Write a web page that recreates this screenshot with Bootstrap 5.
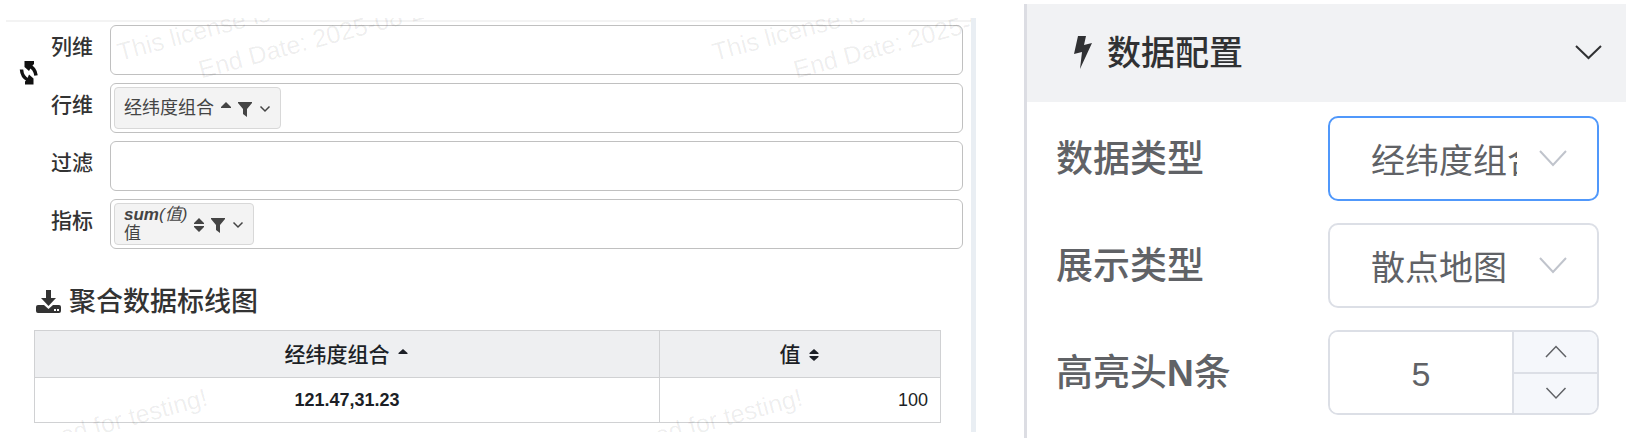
<!DOCTYPE html>
<html lang="zh-CN">
<head>
<meta charset="utf-8">
<meta name="viewport" content="width=device-width, initial-scale=1">
<title>数据配置</title>
<link href="https://cdn.jsdelivr.net/npm/bootstrap@5.3.0/dist/css/bootstrap.min.css" rel="stylesheet">
<style>
  body { font-family: "Liberation Sans", "Noto Sans CJK SC", sans-serif; color: #333; background: #fff; }
  svg { display: block; flex: none; }
  .workspace { display: grid; grid-template-columns: 970fr 602fr; column-gap: 48px; padding: 4px 14px 0 6px; min-height: 100vh; }

  .query-pane { margin: 14px 0 6px; padding-top: 2px; border-right: 5px solid #e9eef3; }
  .query-body { border-top: 2px solid #f3f3f3; padding: 3px 8px 0 0; }
  .swap-col { width: 45px; padding-left: 13px; }
  .field-label { width: 59px; font-size: 21px; line-height: 44px; font-weight: 500; }
  .drop-zone { height: 50px; padding: 3px; border: 1px solid #c0c0c0; border-radius: 6px; }
  .chip { height: 42px; padding: 0 9px; gap: 7px; border: 1px solid #d8d8d8; border-radius: 4px; background: #f3f3f3; color: #444; font-size: 18px; line-height: 20px; }
  .chip-measure { font-size: 17px; line-height: 19px; }
  .chip svg { margin-top: 2px; }
  .result { padding: 33px 22px 0 28px; }
  .result-title { font-size: 27px; line-height: 40px; font-weight: 500; margin-bottom: 8px; gap: 8px; padding-left: 2px; }
  .result-table { font-size: 18px; line-height: 27px; color: #1c1f26; border-color: #d0d1d3; margin: 0; }
  .result-table > thead th { background: #eeeff1; font-size: 21px; font-weight: 500; padding: 10px 14px 9px 12px; text-align: center; color: #1c1f26; }
  .result-table > tbody > tr > * { padding: 9px 12px 8px; background: transparent; color: #1c1f26; }
  .watermark { inset: 0; width: 100%; height: 100%; pointer-events: none; font-size: 25px; fill: #000; fill-opacity: .07; }

  .config-pane { border-left: 3px solid #dcdde3; }
  .config-head { height: 98px; padding: 0 24px 0 46px; background: #f1f2f4; border: 0; color: #303133; font-size: 34px; font-weight: 500; gap: 15px; }
  .config-form { padding: 14px 27px 0 29px; display: grid; row-gap: 22px; }
  .config-label { font-size: 37px; line-height: 50px; font-weight: 500; color: #606266; padding-top: 3px; }
  .config-label b { font-weight: 700; }
  .control { width: 271px; height: 85px; border: 2px solid #dcdfe6; border-radius: 10px; color: #606266; font-size: 34px; background-color: #fff; }
  select.control { appearance: none; padding: 5px 80px 0 41px; background-repeat: no-repeat; background-position: right 30px top 32px; text-overflow: clip;
    background-image: url("data:image/svg+xml,%3Csvg xmlns='http://www.w3.org/2000/svg' width='28' height='17' fill='none' stroke='%23c0c4cc' stroke-width='2'%3E%3Cpath d='M1 1l13 14L27 1'/%3E%3C/svg%3E"); }
  select.control.is-active { border-color: #5098fb; }
  .control:focus { outline: 0; }
  .stepper { overflow: hidden; }
  .stepper input { flex: 1 1 0; min-width: 0; padding: 4px 0 0; border: 0; text-align: center; color: inherit; appearance: textfield; }
  .stepper input::-webkit-inner-spin-button { appearance: none; margin: 0; }
  .stepper-keys { flex: none; width: 85px; border-left: 2px solid #dcdfe6; }
  .stepper-keys button { border: 0; background: #f5f7fb; padding: 0; }
  .stepper-keys button + button { border-top: 2px solid #dcdfe6; }
</style>
</head>
<body>
<main class="workspace">
  <section class="query-pane position-relative overflow-hidden">
    <div class="query-body">
      <div class="d-flex">
        <div class="swap-col">
          <button type="button" class="btn p-0 border-0 mt-4" aria-label="交换行列">
            <svg width="20" height="48" viewBox="0 0 20 48"><g fill="none" stroke="#111" stroke-width="3.500"><path d="M10 17Q16 19 17 26.500"/><path d="M2.500 20.500Q3 28 9 31"/></g><path d="M5.500 12H15v3l-2.500 2.500L10 22 5.500 18z M14.500 35.500H6v-3l2-2 2-5 4.500 4z" fill="#111"/></svg>
          </button>
        </div>
        <div class="flex-grow-1 d-grid gap-2">
          <div class="d-flex"><div class="field-label">列维</div><div class="drop-zone flex-grow-1"></div></div>
          <div class="d-flex"><div class="field-label">行维</div>
            <div class="drop-zone flex-grow-1 d-flex">
              <div class="chip d-flex align-items-center"><span>经纬度组合</span>
                <svg width="10" height="14" viewBox="0 0 10 14" fill="#444"><path d="M5 0l5 5v1H0V5z"/></svg>
                <svg width="14" height="15" viewBox="0 0 14 15" fill="#444"><path d="M0 0h14v1L9 7v8l-4-3V7L0 1z"/></svg>
                <svg width="12" height="8" viewBox="0 0 12 8" fill="none" stroke="#444" stroke-width="1.500"><path d="M1.500 1.500L6 6l4.500-4.500"/></svg>
              </div>
            </div>
          </div>
          <div class="d-flex"><div class="field-label">过滤</div><div class="drop-zone flex-grow-1"></div></div>
          <div class="d-flex"><div class="field-label">指标</div>
            <div class="drop-zone flex-grow-1 d-flex">
              <div class="chip d-flex align-items-center"><span class="chip-measure"><i><b>sum</b>(值)</i><br>值</span>
                <svg width="10" height="14" viewBox="0 0 10 14" fill="#444"><path d="M5 0l5 5v1H0V5zM0 8h10v1l-5 5-5-5z"/></svg>
                <svg width="14" height="15" viewBox="0 0 14 15" fill="#444"><path d="M0 0h14v1L9 7v8l-4-3V7L0 1z"/></svg>
                <svg width="12" height="8" viewBox="0 0 12 8" fill="none" stroke="#444" stroke-width="1.500"><path d="M1.500 1.500L6 6l4.500-4.500"/></svg>
              </div>
            </div>
          </div>
        </div>
      </div>
      <div class="result">
        <h2 class="result-title d-flex align-items-center">
          <svg width="25" height="24" viewBox="0 0 25 24" fill="#333"><path d="M10 0h5v8h5l-7.500 8L5 8h5z"/><path fill-rule="evenodd" d="M2 15h6l4.500 4 4.500-4h6q2 0 2 2v4q0 2-2 2H2q-2 0-2-2v-4q0-2 2-2zM18 19v2h2v-2zM21 19v2h2v-2z"/></svg>
          <span>聚合数据标线图</span>
        </h2>
        <table class="table table-bordered result-table">
          <colgroup><col style="width:69%"><col style="width:31%"></colgroup>
          <thead><tr>
            <th scope="col"><span class="d-inline-flex align-items-center gap-2">经纬度组合 <svg width="10" height="14" viewBox="0 0 10 14" fill="#1c1f26"><path d="M5 1l4.500 4v1h-9V5z"/></svg></span></th>
            <th scope="col"><span class="d-inline-flex align-items-center gap-2">值 <svg width="10" height="14" viewBox="0 0 10 14" fill="#1c1f26"><path d="M5 1l4.500 4v1h-9V5zM.5 8h9v1L5 13 .5 9z"/></svg></span></th>
          </tr></thead>
          <tbody><tr><th scope="row" class="text-center">121.47,31.23</th><td class="text-end">100</td></tr></tbody>
        </table>
      </div>
    </div>
    <svg class="watermark position-absolute" aria-hidden="true">
      <g transform="translate(114 43) rotate(-15)"><text>This license is</text><text x="74" y="38">End Date: 2025-08-22</text></g>
      <g transform="translate(709 43) rotate(-15)"><text>This license is</text><text x="74" y="38">End Date: 2025-08-22</text></g>
      <g transform="translate(203 387) rotate(-15)" text-anchor="end"><text>used for testing!</text></g>
      <g transform="translate(798 387) rotate(-15)" text-anchor="end"><text>used for testing!</text></g>
    </svg>
  </section>

  <section class="config-pane">
    <button type="button" class="config-head d-flex align-items-center w-100" aria-expanded="true">
      <svg width="19" height="34" viewBox="0 0 19 34" fill="#303133"><path d="M5 0h8l-2 9 8-2L7 33l2-17-8 2z"/></svg>
      <span>数据配置</span>
      <svg class="ms-auto" width="27" height="16" viewBox="0 0 27 16" fill="none" stroke="#303133" stroke-width="2"><path d="M1 1l12.500 12L26 1"/></svg>
    </button>
    <form class="config-form">
      <div class="d-flex align-items-center justify-content-between">
        <label class="config-label" for="data-type">数据类型</label>
        <select id="data-type" class="control is-active"><option>经纬度组合</option></select>
      </div>
      <div class="d-flex align-items-center justify-content-between">
        <label class="config-label" for="view-type">展示类型</label>
        <select id="view-type" class="control"><option>散点地图</option></select>
      </div>
      <div class="d-flex align-items-center justify-content-between">
        <label class="config-label" for="top-n">高亮头<b>N</b>条</label>
        <div class="control stepper d-flex">
          <input id="top-n" type="number" value="5">
          <div class="stepper-keys d-flex flex-column">
            <button type="button" class="flex-fill d-flex align-items-center justify-content-center" aria-label="增加"><svg width="22" height="13" viewBox="0 0 22 13" fill="none" stroke="#606266" stroke-width="1.500"><path d="M1 12L11 1.500 21 12"/></svg></button>
            <button type="button" class="flex-fill d-flex align-items-center justify-content-center" aria-label="减少"><svg width="22" height="13" viewBox="0 0 22 13" fill="none" stroke="#606266" stroke-width="1.500"><path d="M1.500 1L11 11l9.500-10"/></svg></button>
          </div>
        </div>
      </div>
    </form>
  </section>
</main>
<script src="https://cdn.jsdelivr.net/npm/bootstrap@5.3.0/dist/js/bootstrap.bundle.min.js"></script>
</body>
</html>
